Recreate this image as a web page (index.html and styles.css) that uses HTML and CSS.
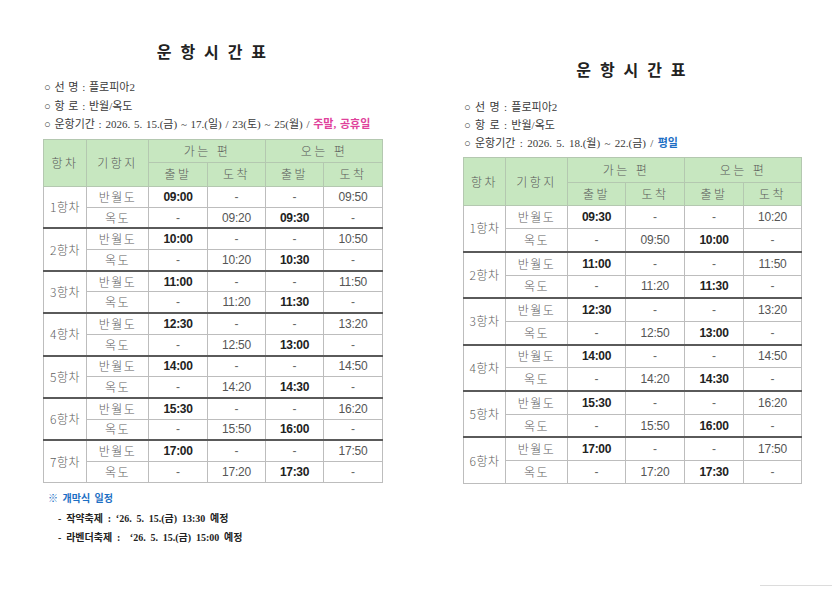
FILE: index.html
```html
<!DOCTYPE html>
<html lang="ko">
<head>
<meta charset="utf-8">
<title>운항시간표</title>
<link rel="stylesheet" href="styles.css">
</head>
<body>
<div class="page">
  <section class="sheet sheet-left">
    <h1 class="title">운 항 시 간 표</h1>
    <ul class="info">
      <li>○ 선 명 : 플로피아2</li>
      <li>○ 항 로 : 반월/옥도</li>
      <li>○ 운항기간 : 2026. 5. 15.(금) ~ 17.(일) / 23(토) ~ 25(월) / <b class="pink">주말, 공휴일</b></li>
    </ul>
    <table class="tt tt-left">
      <colgroup><col class="c1"><col class="c2"><col class="c3"><col class="c4"><col class="c5"><col class="c6"></colgroup>
      <thead>
        <tr class="h1"><th rowspan="2">항차</th><th rowspan="2">기항지</th><th colspan="2">가는 편</th><th colspan="2">오는 편</th></tr>
        <tr class="h2"><th>출발</th><th>도착</th><th>출발</th><th>도착</th></tr>
      </thead>
      <tbody>
        <tr class="g"><td rowspan="2" class="no">1항차</td><td class="pt">반월도</td><td class="b">09:00</td><td class="d">-</td><td class="d">-</td><td class="t">09:50</td></tr>
        <tr><td class="pt">옥도</td><td class="d">-</td><td class="t">09:20</td><td class="b">09:30</td><td class="d">-</td></tr>
        <tr class="g"><td rowspan="2" class="no">2항차</td><td class="pt">반월도</td><td class="b">10:00</td><td class="d">-</td><td class="d">-</td><td class="t">10:50</td></tr>
        <tr><td class="pt">옥도</td><td class="d">-</td><td class="t">10:20</td><td class="b">10:30</td><td class="d">-</td></tr>
        <tr class="g"><td rowspan="2" class="no">3항차</td><td class="pt">반월도</td><td class="b">11:00</td><td class="d">-</td><td class="d">-</td><td class="t">11:50</td></tr>
        <tr><td class="pt">옥도</td><td class="d">-</td><td class="t">11:20</td><td class="b">11:30</td><td class="d">-</td></tr>
        <tr class="g"><td rowspan="2" class="no">4항차</td><td class="pt">반월도</td><td class="b">12:30</td><td class="d">-</td><td class="d">-</td><td class="t">13:20</td></tr>
        <tr><td class="pt">옥도</td><td class="d">-</td><td class="t">12:50</td><td class="b">13:00</td><td class="d">-</td></tr>
        <tr class="g"><td rowspan="2" class="no">5항차</td><td class="pt">반월도</td><td class="b">14:00</td><td class="d">-</td><td class="d">-</td><td class="t">14:50</td></tr>
        <tr><td class="pt">옥도</td><td class="d">-</td><td class="t">14:20</td><td class="b">14:30</td><td class="d">-</td></tr>
        <tr class="g"><td rowspan="2" class="no">6항차</td><td class="pt">반월도</td><td class="b">15:30</td><td class="d">-</td><td class="d">-</td><td class="t">16:20</td></tr>
        <tr><td class="pt">옥도</td><td class="d">-</td><td class="t">15:50</td><td class="b">16:00</td><td class="d">-</td></tr>
        <tr class="g"><td rowspan="2" class="no">7항차</td><td class="pt">반월도</td><td class="b">17:00</td><td class="d">-</td><td class="d">-</td><td class="t">17:50</td></tr>
        <tr><td class="pt">옥도</td><td class="d">-</td><td class="t">17:20</td><td class="b">17:30</td><td class="d">-</td></tr>
      </tbody>
    </table>
    <div class="notes">
      <p class="notes-head">※ 개막식 일정</p>
      <p class="notes-item">- 작약축제 : ‘26. 5. 15.(금) 13:30 예정</p>
      <p class="notes-item">- 라벤더축제 : &nbsp;‘26. 5. 15.(금) 15:00 예정</p>
    </div>
  </section>

  <section class="sheet sheet-right">
    <h1 class="title">운 항 시 간 표</h1>
    <ul class="info">
      <li>○ 선 명 : 플로피아2</li>
      <li>○ 항 로 : 반월/옥도</li>
      <li>○ 운항기간 : 2026. 5. 18.(월) ~ 22.(금) / <b class="blue">평일</b></li>
    </ul>
    <table class="tt tt-right">
      <colgroup><col class="c1"><col class="c2"><col class="c3"><col class="c4"><col class="c5"><col class="c6"></colgroup>
      <thead>
        <tr class="h1"><th rowspan="2">항차</th><th rowspan="2">기항지</th><th colspan="2">가는 편</th><th colspan="2">오는 편</th></tr>
        <tr class="h2"><th>출발</th><th>도착</th><th>출발</th><th>도착</th></tr>
      </thead>
      <tbody>
        <tr class="g"><td rowspan="2" class="no">1항차</td><td class="pt">반월도</td><td class="b">09:30</td><td class="d">-</td><td class="d">-</td><td class="t">10:20</td></tr>
        <tr><td class="pt">옥도</td><td class="d">-</td><td class="t">09:50</td><td class="b">10:00</td><td class="d">-</td></tr>
        <tr class="g"><td rowspan="2" class="no">2항차</td><td class="pt">반월도</td><td class="b">11:00</td><td class="d">-</td><td class="d">-</td><td class="t">11:50</td></tr>
        <tr><td class="pt">옥도</td><td class="d">-</td><td class="t">11:20</td><td class="b">11:30</td><td class="d">-</td></tr>
        <tr class="g"><td rowspan="2" class="no">3항차</td><td class="pt">반월도</td><td class="b">12:30</td><td class="d">-</td><td class="d">-</td><td class="t">13:20</td></tr>
        <tr><td class="pt">옥도</td><td class="d">-</td><td class="t">12:50</td><td class="b">13:00</td><td class="d">-</td></tr>
        <tr class="g"><td rowspan="2" class="no">4항차</td><td class="pt">반월도</td><td class="b">14:00</td><td class="d">-</td><td class="d">-</td><td class="t">14:50</td></tr>
        <tr><td class="pt">옥도</td><td class="d">-</td><td class="t">14:20</td><td class="b">14:30</td><td class="d">-</td></tr>
        <tr class="g"><td rowspan="2" class="no">5항차</td><td class="pt">반월도</td><td class="b">15:30</td><td class="d">-</td><td class="d">-</td><td class="t">16:20</td></tr>
        <tr><td class="pt">옥도</td><td class="d">-</td><td class="t">15:50</td><td class="b">16:00</td><td class="d">-</td></tr>
        <tr class="g"><td rowspan="2" class="no">6항차</td><td class="pt">반월도</td><td class="b">17:00</td><td class="d">-</td><td class="d">-</td><td class="t">17:50</td></tr>
        <tr><td class="pt">옥도</td><td class="d">-</td><td class="t">17:20</td><td class="b">17:30</td><td class="d">-</td></tr>
      </tbody>
    </table>
  </section>
</div>
<div class="scan-edge"></div>
</body>
</html>
```
FILE: styles.css
```css
html, body {
  margin: 0;
  padding: 0;
  background: #ffffff;
}
body {
  width: 835px;
  height: 591px;
  overflow: hidden;
  position: relative;
  font-family: "Liberation Serif", "Noto Sans CJK KR", serif;
  color: #333;
}
.page {
  display: flex;
  align-items: flex-start;
  padding-left: 43px;
  gap: 81px;
}
.sheet {
  display: flex;
  flex-direction: column;
}
.sheet-left {
  width: 339px;
  padding-top: 41px;
}
.sheet-right {
  width: 338px;
  padding-top: 59px;
}
.title {
  margin: 0;
  font-family: "Noto Sans CJK KR", sans-serif;
  font-size: 16px;
  line-height: 20px;
  font-weight: 700;
  letter-spacing: 2.2px;
  text-align: center;
  color: #222;
}
.info {
  list-style: none;
  margin: 17px 0 0 1px;
  padding: 0;
  font-size: 11px;
  line-height: 18.5px;
  word-spacing: 1px;
  color: #3a3a3a;
}
.sheet-right .info {
  margin-top: 19px;
  line-height: 18px;
  word-spacing: 1.6px;
}
.info li {
  white-space: nowrap;
}
.pink {
  color: #e0419b;
  font-weight: 700;
}
.blue {
  color: #1c6fc4;
  font-weight: 700;
}
.tt {
  border-collapse: collapse;
  table-layout: fixed;
  border: 1px solid #a8a8a8;
  font-family: "Noto Sans CJK KR", sans-serif;
  font-size: 12px;
  color: #606060;
}
.tt-left {
  margin-top: 5px;
  width: 339px;
}
.tt-right {
  margin-top: 5px;
  width: 338px;
}
.tt-left .c1 { width: 43px; }
.tt-left .c2 { width: 62px; }
.tt-left .c3 { width: 59px; }
.tt-left .c4 { width: 58px; }
.tt-left .c5 { width: 58px; }
.tt-left .c6 { width: 59px; }
.tt-right .c1 { width: 42px; }
.tt-right .c2 { width: 62px; }
.tt-right .c3 { width: 58px; }
.tt-right .c4 { width: 59px; }
.tt-right .c5 { width: 59px; }
.tt-right .c6 { width: 58px; }
.tt th, .tt td {
  border: 1px solid #bdbdbd;
  padding: 0;
  text-align: center;
  vertical-align: middle;
  white-space: nowrap;
  line-height: 14px;
}
.tt th {
  background: #c7e7c0;
  font-weight: 300;
  color: #5a5a5a;
  letter-spacing: 2.5px;
  border-color: #b4c8b0;
}
.tt-left .h1 { height: 23px; }
.tt-left .h2 { height: 24px; }
.tt-right .h1 { height: 25px; }
.tt-right .h2 { height: 23px; }
.tt-left tbody tr { height: 21.2px; }
.tt-right tbody tr { height: 23.2px; }
.tt tbody tr.g td {
  border-top: 2px solid #5a5a5a;
}
.tt tbody tr.g:first-child td {
  border-top: 1px solid #bdbdbd;
}
.tt .no {
  font-weight: 300;
  letter-spacing: 0.5px;
}
.tt .pt {
  font-weight: 300;
  letter-spacing: 1.5px;
}
.tt .b {
  font-family: "Liberation Sans", sans-serif;
  font-weight: 700;
  color: #222;
  letter-spacing: -0.3px;
}
.tt .t {
  font-family: "Liberation Sans", sans-serif;
  color: #555;
  letter-spacing: -0.2px;
}
.tt .d {
  font-family: "Liberation Sans", sans-serif;
  color: #666;
}
.notes {
  margin-top: 6px;
  font-family: "Liberation Serif", "Noto Sans CJK KR", serif;
  font-size: 10px;
  font-weight: 700;
  color: #222;
}
.notes p {
  margin: 0;
  line-height: 19.5px;
  white-space: nowrap;
}
.notes-head {
  color: #1c6fc4;
  padding-left: 5px;
  word-spacing: 2px;
}
.notes-item {
  padding-left: 15px;
  word-spacing: 2.3px;
}
.scan-edge {
  position: absolute;
  left: 760px;
  top: 585px;
  width: 72px;
  height: 1px;
  background: #dcdcdc;
}
```
